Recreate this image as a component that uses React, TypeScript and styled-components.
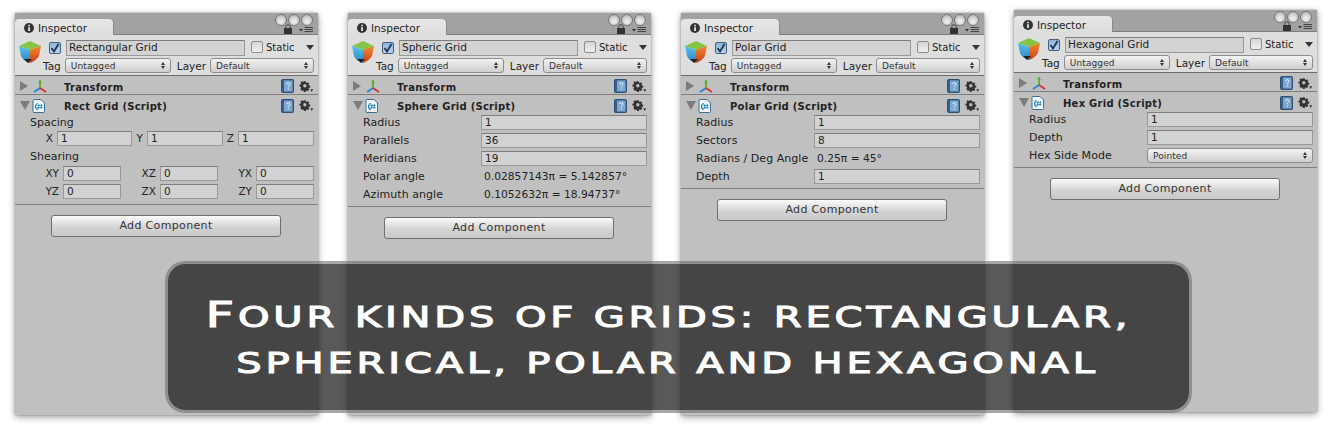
import React from "react";
import styled, { createGlobalStyle } from "styled-components";

const Global = createGlobalStyle`
  html, body { margin: 0; padding: 0; background: #fff; }
  body { font-family: "DejaVu Sans", sans-serif; font-size: 11px; color: #222; }
`;

const Page = styled.div`
  position: relative; width: 1332px; height: 433px; overflow: hidden; background: #fff;
  display: flex; align-items: flex-start; gap: 30px; padding: 13px 0 0 15px; box-sizing: border-box;
`;
const Panel = styled.section<{ $lift?: boolean }>`
  width: 303px; height: 402px; flex: none; margin-top: ${p => (p.$lift ? "-3px" : "0")};
  background: #c0c0c0; box-shadow: 0 2px 7px rgba(0,0,0,.38), 0 0 2px rgba(0,0,0,.3);
  display: flex; flex-direction: column;
`;
const Strip = styled.div`
  position: relative; height: 22px; flex: none; box-sizing: border-box; padding-top: 6px;
  background: #a2a2a2; border-bottom: 1px solid #7c7c7c;
`;
const Tab = styled.div`
  width: 98px; height: 16px; box-sizing: border-box; background: linear-gradient(#e6e6e6,#dedede);
  border-radius: 4px 4px 0 0; display: flex; align-items: center; gap: 4px; padding: 1px 0 0 9px;
  font-size: 10.5px; box-shadow: 1px 0 0 #888;
`;
const Controls = styled.div`
  position: absolute; right: 5px; top: 1px; width: 38px; height: 20px;
`;
const Dots = styled.div`display: flex; justify-content: flex-end; gap: 1px;`;
const Dot = styled.span`
  width: 12px; height: 12px; border-radius: 50%; box-sizing: border-box;
  border: 1px solid #777; background: radial-gradient(circle at 50% 65%, #e8e8e8 20%, #bdbdbd 75%, #8f8f8f);
`;
const LockSlot = styled.span`position: absolute; left: 9px; top: 10px; display: flex;`;
const MenuSlot = styled.span`position: absolute; right: 0; top: 13px; display: flex;`;
const Head = styled.div`
  height: 41px; flex: none; box-sizing: border-box; background: #dedede; border-bottom: 1px solid #6c6c6c;
  display: grid; grid-template-columns: 31px 1fr; padding: 5px 4px 0 3px;
`;
const HeadRows = styled.div`display: flex; flex-direction: column; gap: 3px;`;
const HeadTop = styled.div`display: flex; align-items: center; height: 15px;`;
const Check = styled.span<{ $on?: boolean }>`
  width: 12px; height: 12px; box-sizing: border-box; flex: none; display: flex; align-items: center; justify-content: center;
  border: 1px solid ${p => (p.$on ? "#44607f" : "#8c8c8c")}; border-radius: 2px;
  background: ${p => (p.$on ? "linear-gradient(#8fb4dd,#b9d3ee)" : "linear-gradient(#d4d4d4,#f0f0f0)")};
`;
const NameField = styled.div`
  width: 179px; height: 16px; margin-left: 5px; box-sizing: border-box; padding-left: 2px; flex: none;
  background: #d3d3d3; border: 1px solid #999; border-top-color: #7d7d7d; font-size: 10.5px; line-height: 12px;
`;
const StaticBox = styled.div`display: flex; align-items: center; gap: 3px; margin: -1px 0 0 6px; font-size: 10px;`;
const Caret = styled.span`
  margin-left: 11px; width: 0; height: 0; border-left: 4px solid transparent; border-right: 4px solid transparent;
  border-top: 5px solid #333;
`;
const HeadBottom = styled.div`display: flex; align-items: center; height: 15px;`;
const HeadLabel = styled.span<{ $left: number }>`font-size: 10.5px; margin: 0 4px 0 ${p => p.$left}px;`;
const Select = styled.div<{ $w?: number }>`
  ${p => (p.$w ? `width:${p.$w}px; flex:none;` : "flex:1;")}
  height: 15px; box-sizing: border-box; display: flex; align-items: center; justify-content: space-between;
  padding: 0 5px; border: 1px solid #8d8d8d; border-radius: 3px; background: linear-gradient(#f2f2f2,#cfcfcf);
  font-size: 9px; letter-spacing: .1px; color: #333;
`;
const Updown = styled.span`display: flex; flex-direction: column; gap: 1px;
  i { display:block; width:0; height:0; border-left:2px solid transparent; border-right:2px solid transparent; }
  i:first-child { border-bottom:3px solid #333; }
  i:last-child { border-top:3px solid #333; }
`;
const SectionRow = styled.div<{ $sep?: boolean }>`
  height: 19px; flex: none; box-sizing: border-box; display: grid; padding: 2px 0 0 1px;
  grid-template-columns: 16px 32px 1fr 18px 19px; align-items: center;
  ${p => (p.$sep ? "border-bottom: 1px solid #7f7f7f;" : "")}
`;
const SectionTitle = styled.span`font-weight: 700; font-size: 10px; letter-spacing: .25px; color: #222; padding-top: 2px;`;
const Tri = styled.span<{ $open?: boolean }>`
  margin-left: 4px; width: 0; height: 0;
  ${p => p.$open
    ? "border-left:5px solid transparent;border-right:5px solid transparent;border-top:9px solid #7c7c7c;"
    : "border-top:5px solid transparent;border-bottom:5px solid transparent;border-left:8px solid #7c7c7c;"}
`;
const IconCell = styled.span`display: flex; align-items: center;`;
const Body = styled.div<{ $bottom: number }>`
  padding: 0 4px ${p => p.$bottom}px 15px; display: flex; flex-direction: column; border-bottom: 1px solid #7f7f7f; flex: none;
`;
const Row = styled.div`
  height: 18px; display: grid; grid-template-columns: 118px 1fr; padding-top: 1px; box-sizing: border-box; align-items: start;
`;
const RowLabel = styled.span`line-height: 15px; letter-spacing: .05px; white-space: nowrap;`;
const Value = styled.span`line-height: 15px; padding-left: 3px; font-size: 10.7px;`;
const Field = styled.div`
  height: 15px; box-sizing: border-box; background: #d2d2d2; border: 1px solid #999; border-top-color: #7f7f7f;
  padding-left: 3px; line-height: 13px; font-size: 10.5px; min-width: 0;
`;
const GroupLabel = styled.div<{ $h: number }>`height: ${p => p.$h}px; line-height: 17px;`;
const VecRow = styled.div`
  display: grid; grid-template-columns: 27px 75px 15px 76px 15px 76px; height: 15px; padding-bottom: 2px;
`;
const ShearRow = styled.div`
  display: grid; grid-template-columns: 33px 58px 39px 58px 38px 58px; height: 15px; margin-bottom: 3px;
`;
const AxisLabel = styled.span`text-align: right; padding-right: 4px; line-height: 15px; font-size: 10.5px;`;
const Foot = styled.div`display: flex; justify-content: center; padding: 10px 1px 0 0;`;
const AddButton = styled.div`
  width: 230px; height: 22px; box-sizing: border-box; border: 1px solid #6f6f6f; border-radius: 3px;
  background: linear-gradient(#fbfbfb,#d4d4d4 55%,#c8c8c8); text-align: center; line-height: 20px;
  letter-spacing: .35px; font-size: 11px; color: #333;
`;
const Banner = styled.div`
  position: absolute; left: 165px; top: 261px; width: 1027px; height: 152px; box-sizing: border-box;
  border-radius: 20px; border: 3px solid rgba(110,110,110,.6); background-clip: padding-box;
  background-color: rgba(10,10,10,.68); color: #fff;
  display: flex; flex-direction: column; align-items: center; padding: 26px 21px 0 0;
`;
const BannerLine = styled.div`
  font-family: "DejaVu Sans", sans-serif; font-size: 29px; line-height: 49px; height: 49px; white-space: nowrap;
  -webkit-text-stroke: 1.1px #fff; transform: scaleX(1.38); letter-spacing: 2.8px; text-transform: uppercase;
`;
const Big = styled.span`font-size: 36px;`;

const Cube = () => (
  <svg width="24" height="26" viewBox="0 0 24 26">
    <defs>
      <linearGradient id="cubeL" x1="0" y1="0" x2="0" y2="1"><stop offset="0" stopColor="#58c4ea" /><stop offset="1" stopColor="#2c7fc0" /></linearGradient>
      <linearGradient id="cubeR" x1="0" y1="0" x2="0" y2="1"><stop offset="0" stopColor="#f08a2c" /><stop offset="1" stopColor="#c8401c" /></linearGradient>
    </defs>
    <path d="M1 6 L12 1 L23 6 L12 10Z" fill="#86c544" />
    <path d="M1 6 L12 10 L12 23 Q5 21 3 16Z" fill="url(#cubeL)" />
    <path d="M12 10 L23 6 L21 16 Q18 21 12 23Z" fill="url(#cubeR)" />
    <path d="M6 19h8l-4 4z" fill="#222" />
  </svg>
);
const Info = () => (
  <svg width="10" height="10" viewBox="0 0 10 10">
    <circle cx="5" cy="5" r="5" fill="#333" />
    <rect x="4.2" y="4.2" width="1.7" height="3.8" fill="#eee" />
    <rect x="4.2" y="1.8" width="1.7" height="1.5" fill="#eee" />
  </svg>
);
const Lock = () => (
  <svg width="8" height="10" viewBox="0 0 8 10">
    <path d="M1.7 5 V3 a2.3 2.3 0 0 1 4.6 0 V5" fill="none" stroke="#444" strokeWidth="1" />
    <rect x="0" y="4" width="8" height="6" fill="#333" />
  </svg>
);
const MenuIcon = () => (
  <svg width="14" height="6" viewBox="0 0 14 6">
    <path d="M0 2h4L2 4.500z" fill="#333" />
    <path d="M5.500 .5h8.500M5.500 2.500h8.500M5.500 4.500h8.500" stroke="#444" strokeWidth="1" />
  </svg>
);
const Axes = () => (
  <svg width="16" height="15" viewBox="0 0 16 15">
    <path d="M8 1v8" stroke="#5fb430" strokeWidth="2" />
    <path d="M8 1l-2 3h4z" fill="#5fb430" />
    <path d="M8 9L2 13" stroke="#2a86d8" strokeWidth="2" />
    <path d="M8 9l6 4" stroke="#d83030" strokeWidth="2" />
  </svg>
);
const CsIcon = () => (
  <svg width="13" height="14" viewBox="0 0 13 14">
    <path d="M1 1.500Q1 .5 2 .5H9L12.500 4V12.500Q12.500 13.500 11.500 13.500H2Q1 13.500 1 12.500Z" fill="#f2f6fa" stroke="#3d6f96" />
    <path d="M6 4.500Q3.500 5 3.500 7.500T6 10.500" fill="none" stroke="#1c87b5" strokeWidth="1.2" />
    <path d="M7 5L6.500 10M9.500 5L9 10M5.500 6.500H10.500M5.500 8.500H10.500" stroke="#1c87b5" strokeWidth=".8" />
  </svg>
);
const Book = () => (
  <svg width="13" height="14" viewBox="0 0 13 14">
    <rect x=".5" y=".5" width="12" height="13" rx="1" fill="#35608c" stroke="#2d4f74" />
    <rect x="3" y="1.500" width="8.500" height="11" fill="#7fa7cd" />
    <path d="M5.500 5.200Q5.700 3.700 7.300 3.700T9 5.200Q9 6.200 7.300 7.200V8.300M7.300 9.500v1.200" fill="none" stroke="#e8f2fa" strokeWidth="1" />
  </svg>
);
const Gear = () => (
  <svg width="15" height="13" viewBox="-1 -1 18 15.600">
    <g fill="#333">
      <path fillRule="evenodd" d="M4.900.5h2.200l.3 1.500 1.100.5 1.300-.8 1.500 1.500-.8 1.300.5 1.100 1.500.3v2.200l-1.500.3-.5 1.100.8 1.300-1.500 1.500-1.300-.8-1.100.5-.3 1.500H4.900l-.3-1.500-1.100-.5-1.300.8L.7 9.600l.8-1.300L1 7.200-.5 6.900V4.700L1 4.400l.5-1.100-.8-1.300L2.200.5l1.300.8 1.100-.5zM6 3.900a2 2 0 1 0 0 4 2 2 0 0 0 0-4z" />
      <path d="M12.500 10h3.500l-1.700 3.500z" />
    </g>
  </svg>
);
const UpDown = () => <Updown><i /><i /></Updown>;

type Props = { name: string; script: string; lift?: boolean; children: React.ReactNode; bottom: number };

const Inspector = ({ name, script, lift, children, bottom }: Props) => (
  <Panel $lift={lift}>
    <Strip>
      <Tab><Info />Inspector</Tab>
      <Controls>
        <Dots><Dot /><Dot /><Dot /></Dots>
        <LockSlot><Lock /></LockSlot>
        <MenuSlot><MenuIcon /></MenuSlot>
      </Controls>
    </Strip>
    <Head>
      <div><Cube /></div>
      <HeadRows>
        <HeadTop>
          <Check $on>
            <svg width="10" height="10" viewBox="0 0 10 10"><path d="M1.500 5L4 8.500 8.500 1" fill="none" stroke="#1d3550" strokeWidth="1.800" /></svg>
          </Check>
          <NameField>{name}</NameField>
          <StaticBox><Check />Static</StaticBox>
          <Caret />
        </HeadTop>
        <HeadBottom>
          <HeadLabel $left={-6}>Tag</HeadLabel>
          <Select $w={106}>Untagged<UpDown /></Select>
          <HeadLabel $left={6}>Layer</HeadLabel>
          <Select>Default<UpDown /></Select>
        </HeadBottom>
      </HeadRows>
    </Head>
    <SectionRow $sep>
      <Tri />
      <IconCell><Axes /></IconCell>
      <SectionTitle>Transform</SectionTitle>
      <IconCell><Book /></IconCell>
      <IconCell><Gear /></IconCell>
    </SectionRow>
    <SectionRow>
      <Tri $open />
      <IconCell><CsIcon /></IconCell>
      <SectionTitle>{script}</SectionTitle>
      <IconCell><Book /></IconCell>
      <IconCell><Gear /></IconCell>
    </SectionRow>
    <Body $bottom={bottom}>{children}</Body>
    <Foot><AddButton>Add Component</AddButton></Foot>
  </Panel>
);

const Prop = ({ label, children }: { label: string; children: React.ReactNode }) => (
  <Row><RowLabel>{label}</RowLabel>{children}</Row>
);

export default function App() {
  return (
    <>
      <Global />
      <Page>
        <Inspector name="Rectangular Grid" script="Rect Grid (Script)" bottom={2}>
          <GroupLabel $h={17}>Spacing</GroupLabel>
          <VecRow>
            <AxisLabel>X</AxisLabel><Field>1</Field>
            <AxisLabel>Y</AxisLabel><Field>1</Field>
            <AxisLabel>Z</AxisLabel><Field>1</Field>
          </VecRow>
          <GroupLabel $h={18}>Shearing</GroupLabel>
          <ShearRow>
            <AxisLabel>XY</AxisLabel><Field>0</Field>
            <AxisLabel>XZ</AxisLabel><Field>0</Field>
            <AxisLabel>YX</AxisLabel><Field>0</Field>
          </ShearRow>
          <ShearRow>
            <AxisLabel>YZ</AxisLabel><Field>0</Field>
            <AxisLabel>ZX</AxisLabel><Field>0</Field>
            <AxisLabel>ZY</AxisLabel><Field>0</Field>
          </ShearRow>
        </Inspector>
        <Inspector name="Spheric Grid" script="Sphere Grid (Script)" bottom={2}>
          <Prop label="Radius"><Field>1</Field></Prop>
          <Prop label="Parallels"><Field>36</Field></Prop>
          <Prop label="Meridians"><Field>19</Field></Prop>
          <Prop label="Polar angle"><Value>0.02857143π = 5.142857°</Value></Prop>
          <Prop label="Azimuth angle"><Value>0.1052632π = 18.94737°</Value></Prop>
        </Inspector>
        <Inspector name="Polar Grid" script="Polar Grid (Script)" bottom={2}>
          <Prop label="Radius"><Field>1</Field></Prop>
          <Prop label="Sectors"><Field>8</Field></Prop>
          <Prop label="Radians / Deg Angle"><Value>0.25π = 45°</Value></Prop>
          <Prop label="Depth"><Field>1</Field></Prop>
        </Inspector>
        <Inspector name="Hexagonal Grid" script="Hex Grid (Script)" lift bottom={2}>
          <Prop label="Radius"><Field>1</Field></Prop>
          <Prop label="Depth"><Field>1</Field></Prop>
          <Prop label="Hex Side Mode"><Select>Pointed<UpDown /></Select></Prop>
        </Inspector>
        <Banner>
          <BannerLine><Big>F</Big>our kinds of grids: rectangular,</BannerLine>
          <BannerLine>spherical, polar and hexagonal</BannerLine>
        </Banner>
      </Page>
    </>
  );
}
